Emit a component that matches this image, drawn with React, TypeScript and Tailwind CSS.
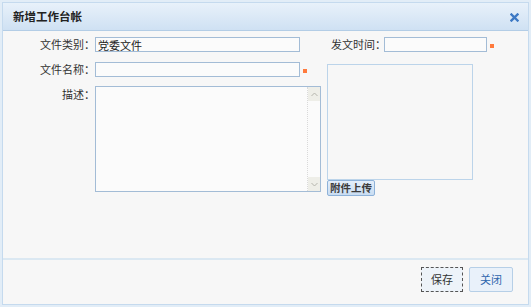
import { useState } from "react";

function Star() {
  return <span className="ml-[3px] mt-[2px] w-[4px] h-[4px] bg-[#ff7a3c] inline-block shrink-0" />;
}

function TextInput({ width, value }: { width: string; value?: string }) {
  return (
    <input
      type="text"
      defaultValue={value}
      className={`${width} h-[15px] px-[2px] text-[11px] leading-[13px] text-[#222] bg-[#fbfbfb] border border-[#a3bcd6] outline-none`}
    />
  );
}

export default function App() {
  const [desc, setDesc] = useState("");

  return (
    <div
      className="w-[531px] h-[307px] bg-[#e2edf7] p-[2px] text-[#333]"
      style={{ fontFamily: '"Noto Sans CJK SC", "Noto Sans", sans-serif' }}
    >
      <div className="h-full flex flex-col bg-[#f7f7f7] border border-[#c5daee]">
        {/* Header */}
        <div className="h-[28px] shrink-0 flex items-center justify-between pl-[10px] pr-[8px] bg-gradient-to-b from-[#e8f1fa] to-[#cfe1f3] border-b border-[#b3cde6]">
          <span className="text-[11.5px] font-bold text-[#222] tracking-[0px]">新增工作台帐</span>
          <svg width="9" height="9" viewBox="0 0 9 9" className="mr-[1px] mt-[1px]">
            <path d="M1.5 1.5 L7.5 7.5 M7.5 1.5 L1.5 7.5" stroke="#3d79c4" strokeWidth="2.4" strokeLinecap="square" />
          </svg>
        </div>

        {/* Body */}
        <div className="flex-1 flex pt-[6px]">
          {/* Left column */}
          <div className="w-[324px] shrink-0 flex flex-col">
            <div className="flex items-center">
              <label className="w-[92px] text-right text-[11px] leading-[15px]">文件类别：</label>
              <TextInput width="w-[205px]" value="党委文件" />
            </div>
            <div className="flex items-center mt-[10px]">
              <label className="w-[92px] text-right text-[11px] leading-[15px]">文件名称：</label>
              <TextInput width="w-[205px]" />
              <Star />
            </div>
            <div className="flex items-start mt-[9px]">
              <label className="w-[92px] text-right text-[11px] leading-[15px] mt-[1px]">描述：</label>
              <div className="w-[226px] h-[106px] flex bg-[#fbfbfb] border border-[#a3bcd6]">
                <textarea
                  value={desc}
                  onChange={(e) => setDesc(e.target.value)}
                  className="flex-1 resize-none bg-transparent outline-none text-[11px] p-[2px] overflow-hidden"
                />
                <div className="w-[13px] flex flex-col justify-between border-l border-dotted border-[#d9d9d9]">
                  <div className="h-[14px] flex items-center justify-center bg-[#eeeee8]">
                    <svg width="7" height="5" viewBox="0 0 7 5">
                      <path d="M0.5 4 L3.5 1 L6.5 4" fill="none" stroke="#b5b5ad" strokeWidth="1" />
                    </svg>
                  </div>
                  <div className="h-[14px] flex items-center justify-center bg-[#eeeee8]">
                    <svg width="7" height="5" viewBox="0 0 7 5">
                      <path d="M0.5 1 L3.5 4 L6.5 1" fill="none" stroke="#b5b5ad" strokeWidth="1" />
                    </svg>
                  </div>
                </div>
              </div>
            </div>
          </div>

          {/* Right column */}
          <div className="flex flex-col">
            <div className="flex items-center pl-[4px]">
              <label className="w-[53px] whitespace-nowrap text-[11px] leading-[15px]">发文时间：</label>
              <TextInput width="w-[103px]" />
              <Star />
            </div>
            <div className="mt-[12px] w-[146px] h-[116px] border border-[#bcd4ea] bg-[#f7f7f7]" />
            <button className="w-[48px] h-[16px] flex items-center justify-center text-[10.5px] leading-none font-bold text-[#3b3b3b] bg-gradient-to-b from-[#e4eefa] to-[#c9ddf2] border border-[#8eb2d9] rounded-[2px]">
              附件上传
            </button>
          </div>
        </div>

        {/* Footer */}
        <div className="h-[46px] shrink-0 border-t-2 border-[#dbe8f2] flex justify-end items-start pt-[7px] pr-[15px] gap-[6px]">
          <button className="w-[42px] h-[25px] text-[11px] text-[#333] bg-[#edf3f9] border border-dashed border-[#555]">
            保存
          </button>
          <button className="w-[44px] h-[25px] text-[11px] text-[#2f66ad] bg-[#e9f1fa] border border-[#b6cfe7] rounded-[2px]">
            关闭
          </button>
        </div>
      </div>
    </div>
  );
}
